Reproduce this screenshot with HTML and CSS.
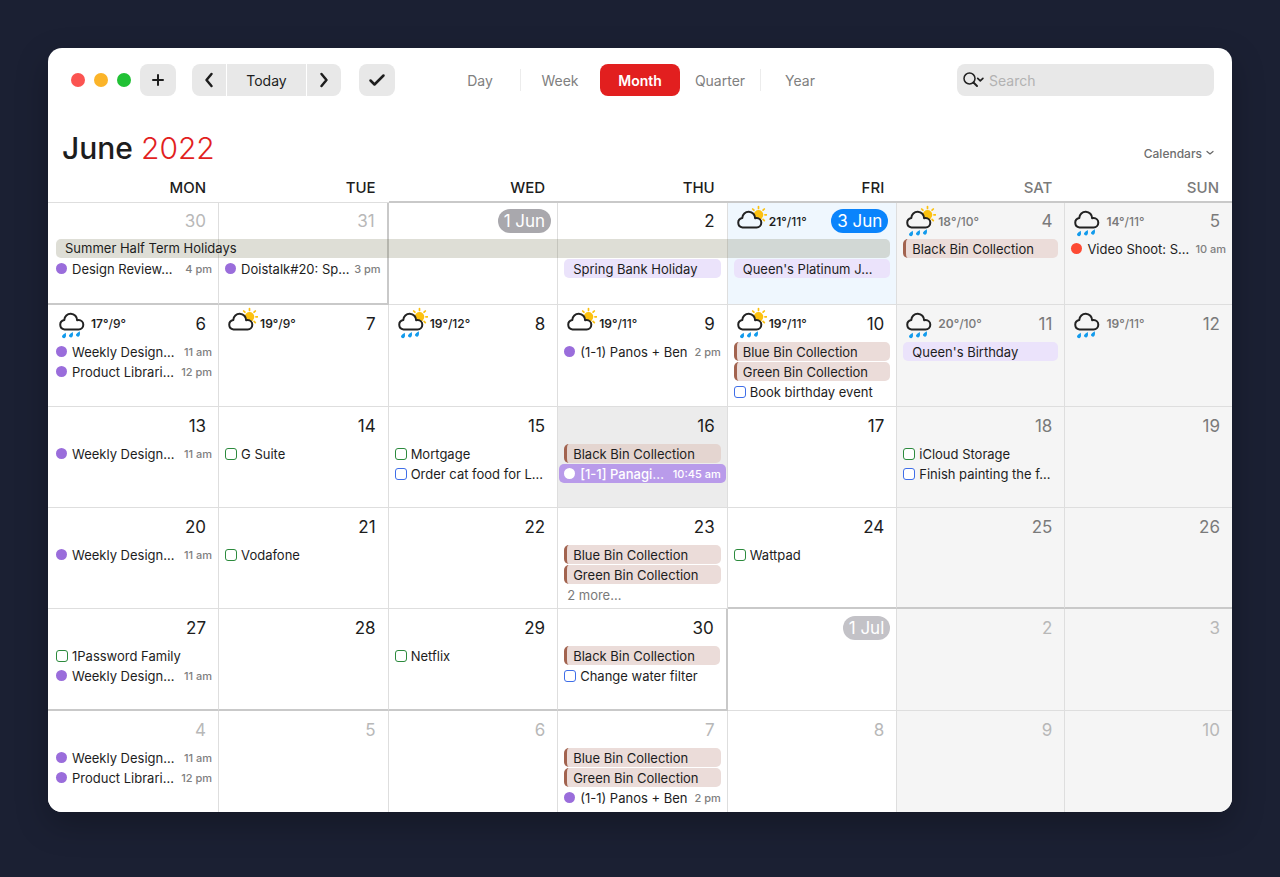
FILE: index.html
```
<!DOCTYPE html>
<html lang="en">
<head>
    <meta charset="UTF-8">
    <title>Calendar - June 2022</title>
    <link rel="stylesheet" href="styles.css">
</head>
<body>
    <!-- weather icons, reused with <use> -->
    <svg class="defs" aria-hidden="true">
        <symbol id="sun" viewBox="0 0 31 33">
            <circle cx="22.5" cy="9.8" r="4.8" fill="#fcc10f"/>
            <path d="M22.5 1.6v1.8M16.7 4l1.2 1.2M28.3 4l-1.2 1.2M28.9 9.8h1.6M28.3 15.6l-1.2-1.2" stroke="#fcc10f" stroke-width="1.7" stroke-linecap="round"/>
        </symbol>
        <symbol id="cloud" viewBox="0 0 31 33">
            <path d="M6.500 22.500H20.600A4.700 4.700 0 0 0 20.600 13.100Q19.800 13.100 19.100 13.300A6.400 6.400 0 0 0 6.300 12.900A4.850 4.850 0 0 0 6.500 22.500Z" stroke="#222" stroke-width="2" stroke-linejoin="round"/>
        </symbol>
        <symbol id="rain" viewBox="0 0 31 33">
            <path id="drop" d="M7.800 25.700Q8.400 29.200 7.500 30.300A1.900 1.900 0 0 1 4 29Q4.600 27.700 7.800 25.700Z" fill="#139bec"/>
            <use href="#drop" x="7" y="-0.800"/>
            <use href="#drop" x="14" y="-1.500"/>
        </symbol>
    </svg>

    <main class="window">
        <header class="toolbar">
            <div class="lights"><i class="red"></i><i class="yellow"></i><i class="green"></i></div>
            <button class="btn" aria-label="New event">
                <svg width="12" height="12" viewBox="0 0 12 12"><path d="M6 1v10M1 6h10" stroke="#1d1d1d" stroke-width="2" stroke-linecap="round"/></svg>
            </button>
            <div class="nav">
                <button class="prev" aria-label="Previous">
                    <svg width="10" height="16" viewBox="0 0 10 16"><path d="M7.500 2L2.500 8l5 6" fill="none" stroke="#1d1d1d" stroke-width="2.500" stroke-linecap="round" stroke-linejoin="round"/></svg>
                </button>
                <button class="today-btn">Today</button>
                <button class="next" aria-label="Next">
                    <svg width="10" height="16" viewBox="0 0 10 16"><path d="M2.500 2L7.500 8l-5 6" fill="none" stroke="#1d1d1d" stroke-width="2.500" stroke-linecap="round" stroke-linejoin="round"/></svg>
                </button>
            </div>
            <button class="btn" aria-label="Tasks">
                <svg width="18" height="14" viewBox="0 0 18 14"><path d="M2.500 7.500L6.500 11.500L15.500 2.500" fill="none" stroke="#1d1d1d" stroke-width="2.500" stroke-linecap="round" stroke-linejoin="round"/></svg>
            </button>
            <div class="views">
                <button>Day</button>
                <button class="line">Week</button>
                <button class="active">Month</button>
                <button>Quarter</button>
                <button class="line">Year</button>
            </div>
            <label class="search">
                <svg width="22" height="16" viewBox="0 0 22 16"><g fill="none" stroke="#222" stroke-linecap="round" stroke-linejoin="round"><circle cx="6.500" cy="6.500" r="5.500" stroke-width="1.500"/><path d="M10.500 10.500L14 14" stroke-width="2"/><path d="M14.700 6.300l2.600 2.500 2.600-2.500" stroke-width="1.700"/></g></svg>
                <input type="text" placeholder="Search" aria-label="Search">
            </label>
        </header>

        <div class="title-row">
            <h1>June <span>2022</span></h1>
            <button class="calendars">Calendars
                <svg width="8" height="6" viewBox="0 0 8 6"><path d="M1 1.500l3 2.500 3-2.500" fill="none" stroke="#666" stroke-width="1.200" stroke-linecap="round" stroke-linejoin="round"/></svg>
            </button>
        </div>

        <table class="month">
            <colgroup>
                <col class="col-first">
                <col class="col-day" span="4">
                <col class="col-sat">
                <col>
            </colgroup>
            <thead>
                <tr>
                    <th>MON</th>
                    <th>TUE</th>
                    <th class="edge">WED</th>
                    <th class="edge">THU</th>
                    <th class="edge">FRI</th>
                    <th class="edge weekend-name">SAT</th>
                    <th class="edge weekend-name">SUN</th>
                </tr>
            </thead>
            <tbody>
                <tr class="first">
                    <td class="other edge-bottom">
                        <div class="head"><b>30</b></div>
                        <div class="banner">Summer Half Term Holidays</div>
                        <ul>
                            <li></li>
                            <li class="event"><i class="dot"></i><span>Design Review…</span><time>4 pm</time></li>
                        </ul>
                    </td>
                    <td class="other edge-bottom edge-right">
                        <div class="head"><b>31</b></div>
                        <ul>
                            <li></li>
                            <li class="event"><i class="dot"></i><span>Doistalk#20: Sp…</span><time>3 pm</time></li>
                        </ul>
                    </td>
                    <td><div class="head"><b class="pill">1 Jun</b></div></td>
                    <td>
                        <div class="head"><b>2</b></div>
                        <ul>
                            <li></li>
                            <li class="bar holiday">Spring Bank Holiday</li>
                        </ul>
                    </td>
                    <td class="today">
                        <div class="head">
                            <svg class="weather"><use href="#sun"/><use href="#cloud"/></svg>
                            <span class="temp"><strong>21°</strong>/11°</span>
                            <b class="pill now">3 Jun</b>
                        </div>
                        <ul>
                            <li></li>
                            <li class="bar holiday">Queen's Platinum J…</li>
                        </ul>
                    </td>
                    <td class="weekend">
                        <div class="head">
                            <svg class="weather"><use href="#sun"/><use href="#cloud"/><use href="#rain"/></svg>
                            <span class="temp"><strong>18°</strong>/10°</span>
                            <b>4</b>
                        </div>
                        <ul>
                            <li class="bar bin">Black Bin Collection</li>
                        </ul>
                    </td>
                    <td class="weekend">
                        <div class="head">
                            <svg class="weather"><use href="#cloud"/><use href="#rain"/></svg>
                            <span class="temp"><strong>14°</strong>/11°</span>
                            <b>5</b>
                        </div>
                        <ul>
                            <li class="event"><i class="dot red"></i><span>Video Shoot: S…</span><time>10 am</time></li>
                        </ul>
                    </td>
                </tr>
                <tr>
                    <td>
                        <div class="head">
                            <svg class="weather"><use href="#cloud"/><use href="#rain"/></svg>
                            <span class="temp"><strong>17°</strong>/9°</span>
                            <b>6</b>
                        </div>
                        <ul>
                            <li class="event"><i class="dot"></i><span>Weekly Design…</span><time>11 am</time></li>
                            <li class="event"><i class="dot"></i><span>Product Librari…</span><time>12 pm</time></li>
                        </ul>
                    </td>
                    <td>
                        <div class="head">
                            <svg class="weather"><use href="#sun"/><use href="#cloud"/></svg>
                            <span class="temp"><strong>19°</strong>/9°</span>
                            <b>7</b>
                        </div>
                    </td>
                    <td>
                        <div class="head">
                            <svg class="weather"><use href="#sun"/><use href="#cloud"/><use href="#rain"/></svg>
                            <span class="temp"><strong>19°</strong>/12°</span>
                            <b>8</b>
                        </div>
                    </td>
                    <td>
                        <div class="head">
                            <svg class="weather"><use href="#sun"/><use href="#cloud"/></svg>
                            <span class="temp"><strong>19°</strong>/11°</span>
                            <b>9</b>
                        </div>
                        <ul>
                            <li class="event"><i class="dot"></i><span>(1-1) Panos + Ben</span><time>2 pm</time></li>
                        </ul>
                    </td>
                    <td>
                        <div class="head">
                            <svg class="weather"><use href="#sun"/><use href="#cloud"/><use href="#rain"/></svg>
                            <span class="temp"><strong>19°</strong>/11°</span>
                            <b>10</b>
                        </div>
                        <ul>
                            <li class="bar bin">Blue Bin Collection</li>
                            <li class="bar bin">Green Bin Collection</li>
                            <li><label class="task blue"><input type="checkbox">Book birthday event</label></li>
                        </ul>
                    </td>
                    <td class="weekend">
                        <div class="head">
                            <svg class="weather"><use href="#cloud"/><use href="#rain"/></svg>
                            <span class="temp"><strong>20°</strong>/10°</span>
                            <b>11</b>
                        </div>
                        <ul>
                            <li class="bar holiday">Queen's Birthday</li>
                        </ul>
                    </td>
                    <td class="weekend">
                        <div class="head">
                            <svg class="weather"><use href="#cloud"/><use href="#rain"/></svg>
                            <span class="temp"><strong>19°</strong>/11°</span>
                            <b>12</b>
                        </div>
                    </td>
                </tr>
                <tr class="short">
                    <td>
                        <div class="head"><b>13</b></div>
                        <ul>
                            <li class="event"><i class="dot"></i><span>Weekly Design…</span><time>11 am</time></li>
                        </ul>
                    </td>
                    <td>
                        <div class="head"><b>14</b></div>
                        <ul>
                            <li><label class="task"><input type="checkbox">G Suite</label></li>
                        </ul>
                    </td>
                    <td>
                        <div class="head"><b>15</b></div>
                        <ul>
                            <li><label class="task"><input type="checkbox">Mortgage</label></li>
                            <li><label class="task blue"><input type="checkbox">Order cat food for L…</label></li>
                        </ul>
                    </td>
                    <td class="selected">
                        <div class="head"><b>16</b></div>
                        <ul>
                            <li class="bar bin">Black Bin Collection</li>
                            <li class="event picked"><i class="dot"></i><span>[1-1] Panagi…</span><time>10:45 am</time></li>
                        </ul>
                    </td>
                    <td><div class="head"><b>17</b></div></td>
                    <td class="weekend">
                        <div class="head"><b>18</b></div>
                        <ul>
                            <li><label class="task"><input type="checkbox">iCloud Storage</label></li>
                            <li><label class="task blue"><input type="checkbox">Finish painting the f…</label></li>
                        </ul>
                    </td>
                    <td class="weekend"><div class="head"><b>19</b></div></td>
                </tr>
                <tr class="short">
                    <td>
                        <div class="head"><b>20</b></div>
                        <ul>
                            <li class="event"><i class="dot"></i><span>Weekly Design…</span><time>11 am</time></li>
                        </ul>
                    </td>
                    <td>
                        <div class="head"><b>21</b></div>
                        <ul>
                            <li><label class="task"><input type="checkbox">Vodafone</label></li>
                        </ul>
                    </td>
                    <td><div class="head"><b>22</b></div></td>
                    <td>
                        <div class="head"><b>23</b></div>
                        <ul>
                            <li class="bar bin">Blue Bin Collection</li>
                            <li class="bar bin">Green Bin Collection</li>
                            <li class="more">2 more…</li>
                        </ul>
                    </td>
                    <td class="edge-bottom">
                        <div class="head"><b>24</b></div>
                        <ul>
                            <li><label class="task"><input type="checkbox">Wattpad</label></li>
                        </ul>
                    </td>
                    <td class="weekend edge-bottom"><div class="head"><b>25</b></div></td>
                    <td class="weekend edge-bottom"><div class="head"><b>26</b></div></td>
                </tr>
                <tr>
                    <td class="edge-bottom">
                        <div class="head"><b>27</b></div>
                        <ul>
                            <li><label class="task"><input type="checkbox">1Password Family</label></li>
                            <li class="event"><i class="dot"></i><span>Weekly Design…</span><time>11 am</time></li>
                        </ul>
                    </td>
                    <td class="edge-bottom"><div class="head"><b>28</b></div></td>
                    <td class="edge-bottom">
                        <div class="head"><b>29</b></div>
                        <ul>
                            <li><label class="task"><input type="checkbox">Netflix</label></li>
                        </ul>
                    </td>
                    <td class="edge-bottom edge-right">
                        <div class="head"><b>30</b></div>
                        <ul>
                            <li class="bar bin">Black Bin Collection</li>
                            <li><label class="task blue"><input type="checkbox">Change water filter</label></li>
                        </ul>
                    </td>
                    <td class="other"><div class="head"><b class="pill">1 Jul</b></div></td>
                    <td class="weekend other"><div class="head"><b>2</b></div></td>
                    <td class="weekend other"><div class="head"><b>3</b></div></td>
                </tr>
                <tr class="short">
                    <td class="other">
                        <div class="head"><b>4</b></div>
                        <ul>
                            <li class="event"><i class="dot"></i><span>Weekly Design…</span><time>11 am</time></li>
                            <li class="event"><i class="dot"></i><span>Product Librari…</span><time>12 pm</time></li>
                        </ul>
                    </td>
                    <td class="other"><div class="head"><b>5</b></div></td>
                    <td class="other"><div class="head"><b>6</b></div></td>
                    <td class="other">
                        <div class="head"><b>7</b></div>
                        <ul>
                            <li class="bar bin">Blue Bin Collection</li>
                            <li class="bar bin">Green Bin Collection</li>
                            <li class="event"><i class="dot"></i><span>(1-1) Panos + Ben</span><time>2 pm</time></li>
                        </ul>
                    </td>
                    <td class="other"><div class="head"><b>8</b></div></td>
                    <td class="weekend other"><div class="head"><b>9</b></div></td>
                    <td class="weekend other"><div class="head"><b>10</b></div></td>
                </tr>
            </tbody>
        </table>
    </main>
</body>
</html>
```
FILE: styles.css
```
*{
    box-sizing: border-box;
    margin: 0;
    padding: 0;
}
body{
    min-height: 100vh;
    padding: 48px 48px 64px;
    background: #1b2033;
    font-family: Inter, "Liberation Sans", sans-serif;
    font-size: 14px;
    color: #1d1d1d;
}
button{
    border: none;
    background: none;
    font-family: inherit;
    color: inherit;
    cursor: pointer;
}
ul{
    list-style: none;
}
.defs{
    position: absolute;
    width: 0;
    height: 0;
}
.window{
    background: #fff;
    border-radius: 14px;
    overflow: hidden;
    box-shadow: 0 12px 32px rgba(0,0,0,.25);
}

/* toolbar */
.toolbar{
    display: flex;
    align-items: center;
    padding: 16px 18px 0 23px;
}
.lights{
    display: flex;
    gap: 9px;
    margin-right: 9px;
}
.lights i{
    width: 14px;
    height: 14px;
    border-radius: 50%;
}
.lights .red{
    background: #fb5451;
}
.lights .yellow{
    background: #fbb429;
}
.lights .green{
    background: #21c135;
}
.btn, .nav button{
    display: flex;
    align-items: center;
    justify-content: center;
    height: 32px;
    background: #e8e8e8;
}
.btn{
    width: 36px;
    border-radius: 8px;
}
.nav{
    display: flex;
    gap: 1px;
    margin: 0 18px 0 16px;
    border-radius: 8px;
    overflow: hidden;
}
.nav .prev, .nav .next{
    width: 34px;
}
.nav .today-btn{
    width: 79px;
    font-size: 14px;
}
.views{
    display: flex;
    margin-left: 45px;
}
.views button{
    position: relative;
    width: 80px;
    height: 32px;
    font-size: 14px;
    color: #808080;
}
.views .line::before{
    content: "";
    position: absolute;
    left: 0;
    top: 5px;
    height: 22px;
    border-left: 1px solid #ececec;
}
.views .active{
    border-radius: 8px;
    background: #e21f1f;
    color: #fff;
    font-weight: 600;
}
.search{
    display: flex;
    align-items: center;
    gap: 4px;
    width: 257px;
    height: 32px;
    margin-left: auto;
    padding: 0 6px;
    border-radius: 8px;
    background: #e8e8e8;
}
.search input{
    flex: 1;
    min-width: 0;
    border: none;
    outline: none;
    background: none;
    font-family: inherit;
    font-size: 14px;
}
.search input::placeholder{
    color: #b2b2b2;
}

/* month title */
.title-row{
    display: flex;
    align-items: center;
    justify-content: space-between;
    margin-top: 32px;
    padding: 0 18px 0 14px;
}
h1{
    font-size: 30px;
    line-height: 41px;
    font-weight: 500;
}
h1 span{
    font-weight: 300;
    color: #e21f1f;
}
.calendars{
    display: flex;
    align-items: center;
    gap: 4px;
    padding-top: 9px;
    font-size: 12px;
    font-weight: 500;
    color: #6e6e6e;
}

/* month grid */
.month{
    width: 100%;
    table-layout: fixed;
    border-spacing: 0;
}
.col-first{
    width: 14.45%;
}
.col-day{
    width: 14.32%;
}
.col-sat{
    width: 14.2%;
}
th{
    height: 34px;
    padding: 4px 13px 0 0;
    border-bottom: 1px solid #dedede;
    text-align: right;
    font-size: 15px;
    font-weight: 500;
}
.weekend-name{
    color: #7a7a7a;
}
th.edge{
    border-bottom: 2px solid #c9c9c9;
}
td{
    --cell: #fff;
    position: relative;
    height: 102px;
    padding: 0 6px;
    border-right: 1px solid #dedede;
    border-bottom: 1px solid #dedede;
    background: var(--cell);
    vertical-align: top;
}
td:first-child{
    padding-left: 8px;
}
td:last-child{
    border-right: none;
}
.short td{
    height: 101px;
}
tr:last-child td{
    border-bottom: none;
}
td.weekend{
    --cell: #f5f5f5;
}
td.today{
    --cell: #eff7fe;
}
td.selected{
    --cell: #ececec;
}
td.edge-bottom{
    border-bottom: 2px solid #c9c9c9;
}
td.edge-right{
    border-right: 2px solid #c9c9c9;
}
.head{
    display: flex;
    align-items: center;
    height: 37px;
}
.first .head{
    height: 36px;
}
.head b{
    margin-left: auto;
    padding-right: 6px;
    font-size: 17px;
    line-height: 24px;
    font-weight: 400;
}
.head .pill{
    padding: 0 6px;
    border-radius: 12px;
    background: #a9a8ad;
    color: #fff;
}
.head .now{
    margin-right: 2px;
    background: #0a84fc;
}
.weekend .head{
    color: #7a7a7a;
}
.other .head{
    color: #b8b8b8;
}
.other .pill{
    background: #c3c2c7;
    color: #fff;
}
.weather{
    width: 31px;
    height: 33px;
    margin: 0 2px;
    fill: var(--cell);
}
.temp{
    font-size: 12px;
    font-weight: 500;
}
.temp strong{
    font-weight: 600;
}

/* events */
li{
    display: flex;
    align-items: center;
    height: 19px;
    margin-bottom: 1px;
    font-size: 13px;
    white-space: nowrap;
}
.event span{
    flex: 1;
}
.event time{
    font-size: 11px;
    font-weight: 500;
    color: #808080;
}
.dot{
    width: 11px;
    height: 11px;
    margin-right: 5px;
    border-radius: 50%;
    background: #9a6ddb;
}
.dot.red{
    background: #fd4a33;
}
.bar{
    padding-left: 9px;
    border-radius: 5px;
}
.bar.bin{
    padding-left: 6px;
    border-left: 3px solid #a2634f;
    background: #ebdcd9;
}
.selected .bar.bin{
    background: #e4d5d0;
}
.bar.holiday{
    background: #ebe3fb;
}
.picked{
    margin: 0 -5px;
    padding: 0 5px;
    border-radius: 5px;
    background: #b99bea;
    color: #fff;
    font-weight: 500;
}
.picked .dot{
    background: #fff;
}
.picked time{
    color: #fff;
}
.task{
    display: flex;
    align-items: center;
}
.task input{
    appearance: none;
    width: 12px;
    height: 12px;
    margin-right: 4px;
    border: 1px solid #2c8a3d;
    border-radius: 3px;
    background: #fff;
}
.task.blue input{
    border-color: #3f6ee8;
}
.more{
    padding-left: 3px;
    color: #7a7a7a;
}
/* all-day event that runs over five days */
.banner{
    position: absolute;
    z-index: 1;
    top: 36px;
    left: 8px;
    width: calc(500% - 16px);
    height: 19px;
    padding-left: 9px;
    border-radius: 5px;
    background: rgba(124,124,92,.25);
    font-size: 13px;
    line-height: 19px;
}
```
